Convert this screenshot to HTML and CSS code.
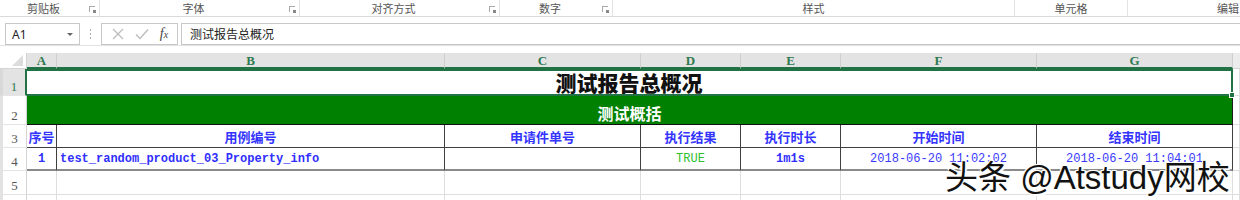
FILE: index.html
```html
<!DOCTYPE html>
<html lang="zh-CN">
<head>
<meta charset="utf-8">
<title>测试报告总概况</title>
<link rel="stylesheet" href="styles.css">
</head>
<body>
<div class="app">
  <div class="ribbon">
    <div class="grp g1"><span class="lbl">剪贴板</span><span class="launch"></span></div>
    <div class="grp g2"><span class="lbl">字体</span><span class="launch"></span></div>
    <div class="grp g3"><span class="lbl">对齐方式</span><span class="launch"></span></div>
    <div class="grp g4"><span class="lbl">数字</span><span class="launch"></span></div>
    <div class="grp g5"><span class="lbl">样式</span></div>
    <div class="grp g6"><span class="lbl">单元格</span></div>
    <div class="grp g7"><span class="lbl">编辑</span></div>
  </div>

  <div class="fbar">
    <div class="namebox"><span class="nb-text">A1</span><span class="nb-arrow"></span></div>
    <div class="dots"><i></i><i></i><i></i></div>
    <div class="fbtns">
      <svg class="ico" width="14" height="14" viewBox="0 0 14 14"><path d="M2 2 L12 12 M12 2 L2 12" stroke="#bdbdbd" stroke-width="1.3" fill="none"/></svg>
      <svg class="ico" width="16" height="14" viewBox="0 0 16 14"><path d="M2 7.5 L6 11.5 L14 2.5" stroke="#bdbdbd" stroke-width="1.4" fill="none"/></svg>
      <span class="fx">f<sub>x</sub></span>
    </div>
    <div class="finput">测试报告总概况</div>
  </div>

  <div class="sheet">
    <div class="corner"><span class="tri"></span></div>
    <div class="ch sel">A</div>
    <div class="ch sel">B</div>
    <div class="ch sel">C</div>
    <div class="ch sel">D</div>
    <div class="ch sel">E</div>
    <div class="ch sel">F</div>
    <div class="ch sel">G</div>
    <div class="ch rest"></div>

    <div class="rh rsel">1</div>
    <div class="c title">测试报告总概况<span class="handle"></span></div>
    <div class="c"></div>

    <div class="rh">2</div>
    <div class="c band">测试概括</div>
    <div class="c"></div>

    <div class="rh">3</div>
    <div class="c hd">序号</div>
    <div class="c hd">用例编号</div>
    <div class="c hd">申请件单号</div>
    <div class="c hd">执行结果</div>
    <div class="c hd">执行时长</div>
    <div class="c hd">开始时间</div>
    <div class="c hd">结束时间</div>
    <div class="c"></div>

    <div class="rh">4</div>
    <div class="c dt ctr b">1</div>
    <div class="c dt left b">test_random_product_03_Property_info</div>
    <div class="c dt"></div>
    <div class="c dt ctr ok">TRUE</div>
    <div class="c dt ctr b">1m1s</div>
    <div class="c dt ctr tm">2018-06-20 11:02:02</div>
    <div class="c dt ctr tm">2018-06-20 11:04:01</div>
    <div class="c"></div>

    <div class="rh">5</div>
    <div class="c"></div><div class="c"></div><div class="c"></div><div class="c"></div>
    <div class="c"></div><div class="c"></div><div class="c"></div><div class="c"></div>

    <div class="rh"></div>
    <div class="c"></div><div class="c"></div><div class="c"></div><div class="c"></div>
    <div class="c"></div><div class="c"></div><div class="c"></div><div class="c"></div>
  </div>

  <div class="watermark">头条 @Atstudy网校</div>
</div>
</body>
</html>
```

FILE: styles.css
```css
* { box-sizing: border-box; }
html, body { margin: 0; padding: 0; background: #fff; overflow: hidden; }
body { width: 1240px; height: 200px; font-family: "Noto Sans CJK SC", "Noto Sans", sans-serif; }
.app { position: relative; width: 1240px; height: 200px; overflow: hidden; }

/* ribbon group labels */
.ribbon { display: flex; height: 17px; border-bottom: 1px solid #dadada; background: #fff; }
.grp { position: relative; display: flex; align-items: center; justify-content: center; padding-right: 12px; height: 16px; border-right: 1px solid #e3e3e3; flex: none; }
.g1 { width: 100px; }
.g2 { width: 200px; }
.g3 { width: 200px; }
.g4 { width: 113px; }
.g5 { width: 402px; padding-right: 0; }
.g6 { width: 113px; padding-right: 0; }
.g7 { width: 200px; padding-right: 0; border-right: none; }
.lbl { font-size: 11px; color: #555; line-height: 16px; }
.launch { position: absolute; right: 4px; top: 6px; width: 6px; height: 6px; border-left: 1px solid #aaa; border-top: 1px solid #aaa; }
.launch::after { content: ""; position: absolute; right: -1px; bottom: -1px; width: 3px; height: 3px; background: #888; }

/* formula bar */
.fbar { display: flex; align-items: center; height: 29px; padding-top: 6px; border-bottom: 1px solid #e2e2e2; }
.namebox { width: 75px; height: 22px; margin-left: 5px; border: 1px solid #c8c8c8; display: flex; align-items: center; justify-content: space-between; padding: 0 6px 0 6px; }
.nb-text { font-family: "Noto Sans", sans-serif; font-size: 12px; color: #222; }
.nb-arrow { width: 0; height: 0; border-left: 3px solid transparent; border-right: 3px solid transparent; border-top: 3px solid #666; }
.dots { width: 21px; display: flex; flex-direction: column; align-items: center; gap: 2px; }
.dots i { display: block; width: 1px; height: 2px; background: #aaa; }
.fbtns { width: 77px; height: 22px; border: 1px solid #c8c8c8; display: flex; align-items: center; justify-content: space-around; padding: 0 4px; }
.fx { font-family: "Liberation Serif", serif; font-style: italic; font-size: 14px; color: #444; line-height: 14px; }
.fx sub { font-size: 10px; vertical-align: baseline; }
.finput { flex: 1; height: 22px; margin-left: 3px; border: 1px solid #c8c8c8; border-right: none; font-size: 12px; color: #222; line-height: 20px; padding-left: 8px; }

/* sheet */
.sheet {
  margin-top: 7px;
  display: grid;
  grid-template-columns: 27px 30px 388px 196px 100px 100px 196px 196px 7px;
  grid-template-rows: 16px 27px 29px 23px 23px 24px 10px;
}
.corner { background: #fff; border-right: 1px solid #d4d4d4; border-bottom: 1px solid #d4d4d4; position: relative; }
.tri { position: absolute; right: 3px; bottom: 2px; width: 0; height: 0; border-left: 11px solid transparent; border-bottom: 11px solid #dcdcdc; }
.ch { background: #e3e3e3; border-right: 1px solid #cfcfcf; display: flex; align-items: center; justify-content: center; font-family: "Liberation Serif", serif; font-weight: bold; font-size: 13px; color: #2f7a50; line-height: 15px; }
.ch.sel { border-bottom: 2px solid #217346; }
.ch.rest { background: #ececec; border-right: none; border-bottom: 1px solid #d4d4d4; }
.rh { background: #fff; border-right: 1px solid #d4d4d4; border-bottom: 1px solid #e4e4e4; border-left: 3px solid #e2e2e2; display: flex; align-items: flex-end; justify-content: center; padding-bottom: 1px; font-family: "Liberation Serif", serif; font-size: 13px; color: #555; line-height: 14px; }
.rh.rsel { background: #e3e3e3; color: #2f7a50; border-right: 2px solid #217346; border-left-color: #d8d8d8; }
.c { border-right: 1px solid #dedede; border-bottom: 1px solid #dedede; display: flex; align-items: flex-end; justify-content: center; white-space: nowrap; overflow: visible; }

.title { grid-column: span 7; position: relative; border: 2px solid #217346; border-left: none; font-weight: 900; font-size: 21px; color: #111; line-height: 24px; }
.handle { position: absolute; right: -4px; bottom: -4px; width: 6px; height: 6px; background: #217346; border: 1px solid #fff; }
.band { grid-column: span 7; background: #008000; color: #fff; font-weight: bold; font-size: 16px; line-height: 20px; padding-bottom: 1px; border-right: 1px solid #1d1d1d; border-bottom: 1px solid #111; }

.hd { font-weight: bold; font-size: 13px; color: #3434ff; line-height: 18px; padding-bottom: 1px; border-right: 1px solid #404040; border-bottom: 1px solid #404040; }
.dt { font-family: "Liberation Mono", monospace; font-size: 12px; color: #2f2fff; line-height: 16px; padding-bottom: 2px; border-right: 1px solid #404040; border-bottom: 2px solid #8a8a8a; }
.dt.left { justify-content: flex-start; padding-left: 3px; }
.dt.b { font-weight: bold; }
.dt.ok { color: #2fbf2f; }
.dt.tm { color: #3a3aff; }

.watermark {
  position: absolute; left: 945px; top: 158px;
  font-family: "Liberation Sans", "Noto Sans CJK SC", sans-serif; font-size: 33px; line-height: 40px; color: #111;
  white-space: nowrap;
  text-shadow: 1px 1px 0 #fff, -1px -1px 0 #fff, 1px -1px 0 #fff, -1px 1px 0 #fff, 2px 2px 1px #fff;
}
```
